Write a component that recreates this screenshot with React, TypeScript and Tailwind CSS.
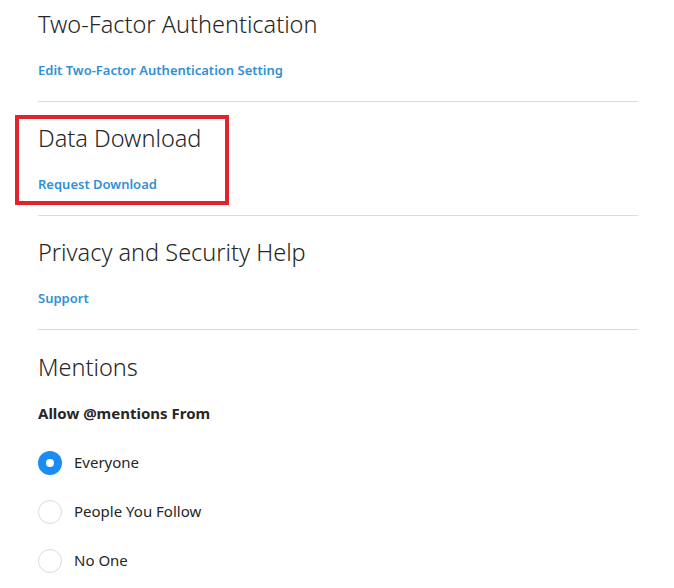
import { useState } from 'react';

const OPTIONS = ['Everyone', 'People You Follow', 'No One'];

function LinkSection({ title, link, first }: { title: string; link: string; first?: boolean }) {
  return (
    <div className={`${first ? 'pt-2' : 'pt-5'} pb-[22px] border-b border-[#dbdbdb]`}>
      <h2 className="h-8 text-[23.5px] leading-8 font-light text-[#262626]">{title}</h2>
      <a href="#" className="mt-[21px] block h-[18px] text-[13px] leading-[18px] font-semibold text-[#3190d4]">
        {link}
      </a>
    </div>
  );
}

export default function App() {
  const [mentions, setMentions] = useState('Everyone');

  return (
    <div className="min-h-screen bg-white pl-[38px]" style={{ fontFamily: '"Noto Sans", "Open Sans", sans-serif' }}>
      <div className="w-[600px]">
        <LinkSection first title="Two-Factor Authentication" link="Edit Two-Factor Authentication Setting" />

        {/* highlighted section */}
        <div className="relative">
          <LinkSection title="Data Download" link="Request Download" />
          <div className="pointer-events-none absolute -left-[23px] top-[13px] h-[90px] w-[214px] border-4 border-[#e0242e]" />
        </div>

        <LinkSection title="Privacy and Security Help" link="Support" />

        <div className="pt-[21px]">
          <h2 className="h-8 text-[23.5px] leading-8 font-light text-[#262626]">Mentions</h2>
          <p className="mt-5 h-5 text-[15px] leading-5 font-bold text-[#262626]">Allow @mentions From</p>
          <div className="mt-[15px] flex flex-col">
            {OPTIONS.map((opt) => {
              const checked = mentions === opt;
              return (
                <label key={opt} className="flex h-[49px] cursor-pointer items-center gap-3" onClick={() => setMentions(opt)}>
                  <span
                    className={`flex h-6 w-6 items-center justify-center rounded-full ${
                      checked ? 'bg-[#1a8df2]' : 'border border-[#dbdbdb] bg-white'
                    }`}
                  >
                    {checked && <span className="h-2 w-2 rounded-full bg-white" />}
                  </span>
                  <span className="text-[15px] text-[#262626]">{opt}</span>
                </label>
              );
            })}
          </div>
        </div>
      </div>
    </div>
  );
}
